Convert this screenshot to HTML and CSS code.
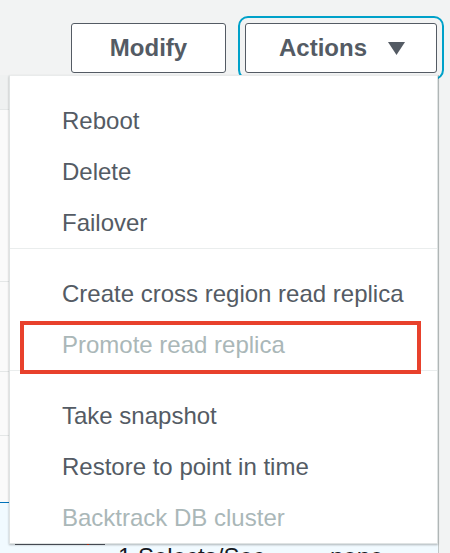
FILE: index.html
```html
<!DOCTYPE html>
<html lang="en">
<head>
<meta charset="utf-8">
<title>Actions menu</title>
<link rel="stylesheet" href="styles.css">
</head>
<body>
<div class="page">
  <div class="toolbar">
    <button class="btn btn-modify">Modify</button>
    <button class="btn btn-actions">
      <span>Actions</span>
      <svg class="caret" width="17" height="13" viewBox="0 0 17 13"><polygon points="0,0 17,0 8.5,13" fill="#545b64"/></svg>
    </button>
  </div>

  <div class="table">
    <div class="row row-head"></div>
    <div class="row row-a"></div>
    <div class="row row-b"></div>
    <div class="row row-c"></div>
    <div class="row row-d"></div>
    <div class="row row-selected">
      <span class="spark"><span class="spark-tick"></span></span>
      <span class="metric">1 Selects/Sec</span>
      <span class="value">none</span>
    </div>
  </div>

  <div class="menu">
    <div class="group">
      <div class="item">Reboot</div>
      <div class="item">Delete</div>
      <div class="item">Failover</div>
    </div>
    <div class="group">
      <div class="item">Create cross region read replica</div>
      <div class="item disabled highlight">Promote read replica</div>
    </div>
    <div class="group">
      <div class="item">Take snapshot</div>
      <div class="item">Restore to point in time</div>
      <div class="item disabled">Backtrack DB cluster</div>
    </div>
  </div>
</div>
</body>
</html>
```

FILE: styles.css
```css
*, *::before, *::after { box-sizing: border-box; }

html, body {
  margin: 0;
  padding: 0;
}

body {
  background: #f2f3f3;
  font-family: "Liberation Sans", Arial, sans-serif;
  color: #545b64;
}

.page {
  position: relative;
  width: 450px;
  height: 553px;
  overflow: hidden;
}

.toolbar {
  height: 75px;
  padding: 23px 13px 0 0;
  display: flex;
  justify-content: flex-end;
  align-items: flex-start;
  gap: 19px;
}

.btn {
  height: 50px;
  margin: 0;
  padding: 0;
  border: 1px solid #545b64;
  border-radius: 3px;
  background: #ffffff;
  color: #545b64;
  font-family: "Liberation Sans", Arial, sans-serif;
  font-size: 24px;
  font-weight: 700;
  display: flex;
  align-items: center;
  justify-content: center;
}

.btn-modify { width: 155px; }

.btn-actions {
  width: 192px;
  gap: 21px;
  padding-left: 2px;
  outline: 2px solid #00a1c9;
  outline-offset: 5px;
}

.caret { display: block; margin-top: 1px; }

.table {
  width: 439px;
  border-right: 1px solid #c2c8c8;
  background: #fafafa;
  display: flex;
  flex-direction: column;
}

.row {
  border-bottom: 1px solid #e4e7e7;
}

.row-head { height: 35px; background: #eff1f1; }
.row-a { height: 172px; }
.row-b { height: 90px; }
.row-c { height: 64px; }
.row-d { height: 67px; border-bottom: 1px solid #0073bb; }

.row-selected {
  height: 60px;
  border-bottom: none;
  background: #f1faff;
  display: flex;
  align-items: flex-start;
  padding-top: 40px;
  line-height: 28px;
  font-size: 24px;
  color: #16191f;
}

.spark {
  position: relative;
  width: 90px;
  height: 2px;
  margin: 0 0 0 15px;
  background: #545b64;
}

.spark-tick {
  position: absolute;
  left: 72px;
  top: -1px;
  width: 2px;
  height: 3px;
  background: #d13212;
}

.metric { margin-left: 13px; width: 212px; }

.menu {
  position: absolute;
  left: 9px;
  top: 75px;
  width: 429px;
  background: #ffffff;
  border: 1px solid #dfe3e3;
  border-top-color: #e9ebeb;
  box-shadow: 0 1px 2px rgba(0, 0, 0, 0.28);
  z-index: 2;
}

.group { padding-top: 19px; }
.group + .group { border-top: 1px solid #eaeded; }

.item {
  height: 51px;
  line-height: 51px;
  padding-left: 52px;
  font-size: 24px;
  color: #545b64;
  white-space: nowrap;
}

.item.disabled { color: #aab7b8; }

.item.highlight { position: relative; }

.item.highlight::after {
  content: "";
  position: absolute;
  left: 10px;
  top: 2px;
  width: 401px;
  height: 53px;
  border: 4px solid #e8412c;
  z-index: 1;
}
```
